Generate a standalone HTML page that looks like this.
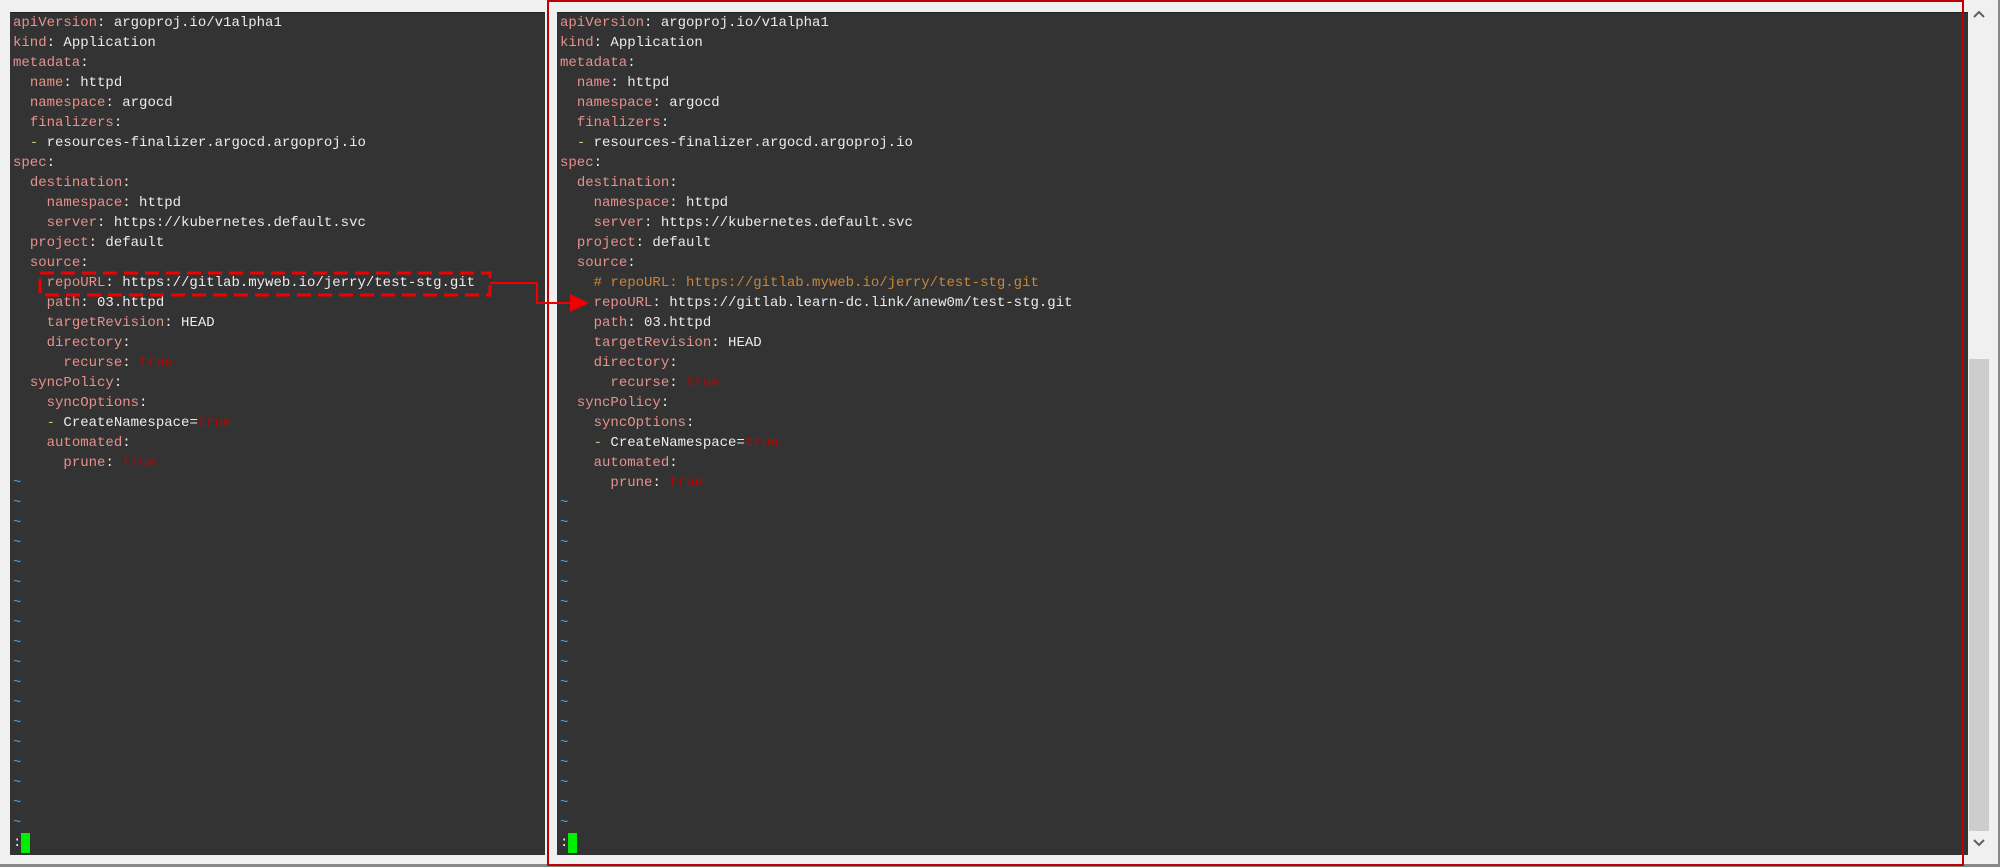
<!DOCTYPE html>
<html><head><meta charset="utf-8"><style>
html,body{margin:0;padding:0;}
body{width:2000px;height:867px;background:#f0f0f0;position:relative;overflow:hidden;font-family:"Liberation Mono",monospace;}
.frame{position:absolute;left:0;top:0;width:1998px;height:864px;border-right:2px solid #888;border-bottom:3px solid #888;}
.pane{position:absolute;top:12px;height:842px;background:#333;overflow:hidden;border-top:1px solid #222;}
pre{margin:0;font-family:"Liberation Mono",monospace;font-size:14px;line-height:20px;color:#ececec;white-space:pre;}
.k{color:#e8918d}.c{color:#c8853c}.t{color:#c00000}.d{color:#c8c080}.w{color:#4aa3db}
.cur{display:inline-block;width:9px;height:20px;background:#00ee00;vertical-align:top;}
</style></head><body>
<div class="frame"></div>
<div class="pane" style="left:10px;width:535px;"><pre style="padding-left:3px;"><span class="k">apiVersion</span>: argoproj.io/v1alpha1
<span class="k">kind</span>: Application
<span class="k">metadata</span>:
  <span class="k">name</span>: httpd
  <span class="k">namespace</span>: argocd
  <span class="k">finalizers</span>:
  <span class="d">-</span> resources-finalizer.argocd.argoproj.io
<span class="k">spec</span>:
  <span class="k">destination</span>:
    <span class="k">namespace</span>: httpd
    <span class="k">server</span>: https://kubernetes.default.svc
  <span class="k">project</span>: default
  <span class="k">source</span>:
    <span class="k">repoURL</span>: https://gitlab.myweb.io/jerry/test-stg.git
    <span class="k">path</span>: 03.httpd
    <span class="k">targetRevision</span>: HEAD
    <span class="k">directory</span>:
      <span class="k">recurse</span>: <span class="t">true</span>
  <span class="k">syncPolicy</span>:
    <span class="k">syncOptions</span>:
    <span class="d">-</span> CreateNamespace=<span class="t">true</span>
    <span class="k">automated</span>:
      <span class="k">prune</span>: <span class="t">true</span>
<span class="w">~
~
~
~
~
~
~
~
~
~
~
~
~
~
~
~
~
~</span>
:<span class="cur"></span></pre></div>
<div class="pane" style="left:557px;width:1411px;"><pre style="padding-left:3px;"><span class="k">apiVersion</span>: argoproj.io/v1alpha1
<span class="k">kind</span>: Application
<span class="k">metadata</span>:
  <span class="k">name</span>: httpd
  <span class="k">namespace</span>: argocd
  <span class="k">finalizers</span>:
  <span class="d">-</span> resources-finalizer.argocd.argoproj.io
<span class="k">spec</span>:
  <span class="k">destination</span>:
    <span class="k">namespace</span>: httpd
    <span class="k">server</span>: https://kubernetes.default.svc
  <span class="k">project</span>: default
  <span class="k">source</span>:
    <span class="c"># repoURL: https://gitlab.myweb.io/jerry/test-stg.git</span>
    <span class="k">repoURL</span>: https://gitlab.learn-dc.link/anew0m/test-stg.git
    <span class="k">path</span>: 03.httpd
    <span class="k">targetRevision</span>: HEAD
    <span class="k">directory</span>:
      <span class="k">recurse</span>: <span class="t">true</span>
  <span class="k">syncPolicy</span>:
    <span class="k">syncOptions</span>:
    <span class="d">-</span> CreateNamespace=<span class="t">true</span>
    <span class="k">automated</span>:
      <span class="k">prune</span>: <span class="t">true</span>
<span class="w">~
~
~
~
~
~
~
~
~
~
~
~
~
~
~
~
~</span>
:<span class="cur"></span></pre></div>
<!-- scrollbar -->
<div style="position:absolute;left:1969px;top:359px;width:20px;height:472px;background:#cdcdcd;"></div>
<svg style="position:absolute;left:0;top:0" width="2000" height="867">
<polyline points="1974,17 1979,12 1984,17" fill="none" stroke="#606060" stroke-width="2"/>
<polyline points="1974,840 1979,845 1984,840" fill="none" stroke="#606060" stroke-width="2"/>
<rect x="548" y="1" width="1415" height="864" fill="none" stroke="#c00000" stroke-width="2"/>
<rect x="40" y="273" width="450" height="22" fill="none" stroke="#f00000" stroke-width="3" stroke-dasharray="14,7"/>
<polyline points="490,283 537,283 537,303 572,303" fill="none" stroke="#f00000" stroke-width="2"/>
<polygon points="570,294 589,303 570,312" fill="#f00000"/>
</svg>
</body></html>
